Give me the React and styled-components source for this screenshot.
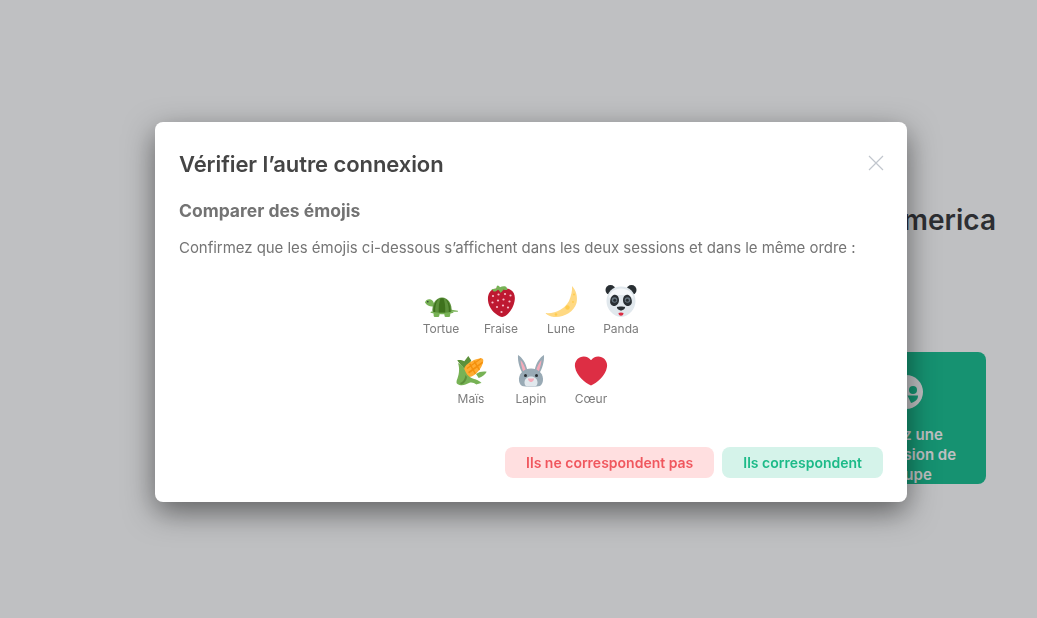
import React from "react";
import styled, { createGlobalStyle } from "styled-components";

const GlobalStyle = createGlobalStyle`
  html, body {
    margin: 0;
    padding: 0;
    height: 100%;
    background: #fff;
    font-family: Inter, "Noto Sans", sans-serif;
  }
`;

const Page = styled.div`
  width: 100%;
  height: 100vh;
  overflow: hidden;
  box-sizing: border-box;
  padding: 201px 41px 0 0;
  display: flex;
  flex-direction: column;
  align-items: flex-end;
`;

const Welcome = styled.h1`
  margin: 0;
  font-size: 28px;
  line-height: 38px;
  font-weight: 600;
  color: #2e2f32;
`;

const TileRow = styled.div`
  margin: 113px 10px 0 0;
  display: flex;
  gap: 20px;
`;

const Tile = styled.div`
  width: 160px;
  height: 132px;
  box-sizing: border-box;
  padding: 23px 20px 0;
  border-radius: 8px;
  background: #0dbd8b;
  color: #fff;
  font-size: 15px;
  font-weight: 600;
  line-height: 20px;
  text-align: center;
`;

const TileIcon = styled.svg`
  display: block;
  width: 34px;
  height: 34px;
  margin: 0 auto 16px;
`;

const Overlay = styled.div`
  position: fixed;
  inset: 0;
  box-sizing: border-box;
  padding: 6px 0 0 25px;
  display: flex;
  align-items: center;
  justify-content: center;
  background: rgba(44, 47, 52, 0.3);
`;

const Dialog = styled.div`
  width: 752px;
  height: 380px;
  box-sizing: border-box;
  padding: 24px;
  display: flex;
  flex-direction: column;
  border-radius: 8px;
  background: #fff;
  box-shadow: 0 10px 30px rgba(0, 0, 0, 0.5);
`;

const DialogHeader = styled.div`
  display: flex;
  align-items: center;
  justify-content: space-between;
  height: 36px;
`;

const Title = styled.h2`
  margin: 0;
  font-size: 22px;
  line-height: 36px;
  font-weight: 600;
  letter-spacing: -0.08px;
  color: #454545;
`;

const CloseButton = styled.svg`
  width: 16px;
  height: 16px;
  margin: -2px -1px 0 0;
`;

const Subtitle = styled.h3`
  margin: 18px 0 0;
  font-size: 17.5px;
  line-height: 22px;
  font-weight: 700;
  color: #737373;
`;

const Description = styled.p`
  margin: 16px 0 0;
  font-size: 15px;
  line-height: 20px;
  letter-spacing: -0.04px;
  color: #757575;
`;

const EmojiGrid = styled.div`
  width: 240px;
  margin: 25px auto 0;
  display: flex;
  flex-wrap: wrap;
  justify-content: center;
`;

const EmojiBlock = styled.div`
  width: 60px;
  height: 70px;
  display: flex;
  flex-direction: column;
  align-items: center;
`;

const EmojiArt = styled.svg`
  width: 36px;
  height: 36px;
  display: block;
`;

const EmojiLabel = styled.div`
  margin-top: 2px;
  font-size: 12px;
  line-height: 16px;
  color: #7c7c7c;
`;

const Actions = styled.div`
  margin-top: auto;
  display: flex;
  justify-content: flex-end;
  gap: 8px;
`;

const ActionButton = styled.button`
  height: 31px;
  padding: 0 21px;
  border: none;
  border-radius: 8px;
  font-family: inherit;
  font-size: 14px;
  font-weight: 600;
  background: ${(p) => (p.$danger ? "#ffdfe0" : "#d5f3ea")};
  color: ${(p) => (p.$danger ? "#f0575e" : "#1cba88")};
`;

const Turtle = () => (
  <EmojiArt viewBox="0 0 36 36">
    <path fill="#77B255" d="M2 19.500c.8-2.700 3.400-3.700 5.800-2.900 2 .7 3 2.500 3.200 4.400l-1 2.500c-3 .3-6.500-1-8-4z" />
    <path fill="#77B255" d="M10.500 29h6.500l-.8 4.200c-.1.500-.5.800-1 .8h-3.400c-.6 0-1-.4-1.100-1zM21 29h6.500l-.4 4c-.1.600-.5 1-1.100 1h-3.400c-.5 0-.9-.3-1-.8zM27 26.500l7.800 1.200c.4.500.1 1-.4 1L27 28.800z" />
    <path fill="#5C913B" d="M9.500 29.500C8.500 21 13 14.500 19 14.500S29.500 21 28.500 29.500c-6 1.400-13 1.400-19 0z" />
    <path fill="#3E721D" d="M15.500 16c-2.500 3-3.600 8-3.300 13.500l-1.700-.3c-.3-5.600 1.400-10.600 5-13.200zM17.500 15.200h3c1.500 4 2 9 1.700 14.600h-6.400c-.3-5.600.2-10.600 1.700-14.600zM22.500 16c3.600 2.600 5.300 7.600 5 13.200l-1.700.3c.3-5.500-.8-10.500-3.300-13.500z" />
    <path fill="#77B255" d="M8 28.500c7 1.800 15 1.800 22 0l.5 1.200c-7.500 2-15.500 2-23 0z" />
    <circle fill="#292F33" cx="4.800" cy="18.800" r=".8" />
  </EmojiArt>
);

const Strawberry = () => (
  <EmojiArt viewBox="0 0 36 36">
    <path fill="#BE1931" d="M11 6c5-1.500 12-1.500 16 .5 4.500 2.200 5.500 7 4.500 12-1 5.500-5 12.500-10.500 15-1.500.7-3 .5-4.500-.3C11 30.500 5.500 24.500 5 17.500 4.500 11.500 7 7.200 11 6z" />
    <path fill="#77B255" d="M8 6.500c1.500-.8 3.500-1 5-.8.500-1 .3-2.500 1.500-3.200 1.500.2 2 1.200 2.500 1.700 1.500-.7 4-1.200 6-.5 1 .5.500 1.500 1.500 3.300-1.500.3-3 0-4-.5-.8 1.500-2 3-3.200 3.300-.6-1.500-1-2.300-2.300-3.100-1.500 1.400-3.500 2.200-4.500 1.800-.5-1-.8-1.400-2-2z" />
    <g fill="#F7BFCB">
      <circle cx="10" cy="13" r="1.100" /><circle cx="15.500" cy="11.500" r="1.100" /><circle cx="22" cy="11" r="1.100" /><circle cx="27.500" cy="12.500" r="1.100" />
      <circle cx="9.500" cy="19.500" r="1.100" /><circle cx="15" cy="17.500" r="1.100" /><circle cx="20.500" cy="16.500" r="1.100" /><circle cx="26.500" cy="18.500" r="1.100" />
      <circle cx="14" cy="24" r="1.100" /><circle cx="20" cy="22.500" r="1.100" /><circle cx="25" cy="24.500" r="1.100" /><circle cx="18.500" cy="29" r="1.100" />
    </g>
  </EmojiArt>
);

const Moon = () => (
  <EmojiArt viewBox="0 0 36 36">
    <path fill="#FFD983" d="M29 3c4 4 6 11 4.500 17C31 29 20 35 11 34c-4-.500-7-2-8.500-4 9.500 1 19.500-4 23.500-12 2-5 3.500-10 3-15z" />
    <g fill="#FFCC4D">
      <circle cx="24.500" cy="24.500" r="2.200" /><circle cx="13" cy="31.500" r="1.300" /><circle cx="31" cy="11.500" r="1" /><circle cx="30" cy="19" r=".9" />
    </g>
  </EmojiArt>
);

const Panda = () => (
  <EmojiArt viewBox="0 0 36 36">
    <circle fill="#292F33" cx="7.500" cy="7" r="5" />
    <circle fill="#292F33" cx="28.500" cy="7" r="5" />
    <path fill="#E1E8ED" d="M18 3.500c8.500 0 14.500 6 14.500 14.500 0 4-1.500 8-4 10.500-3 3-6.500 5.500-10.500 5.500s-7.500-2.500-10.500-5.500c-2.500-2.500-4-6.500-4-10.500C3.500 9.500 9.500 3.500 18 3.500z" />
    <path fill="#F5F8FA" d="M18 5.500c6 0 11.500 3.500 12.500 10-3.500-3.500-7-3.500-12.500-3.500s-9 0-12.500 3.500C6.500 9 12 5.500 18 5.500z" />
    <path fill="#292F33" d="M10.500 12c3-1.300 5.500 1 5.500 5 0 3.800-2.800 6.500-5.500 6-2.700-.5-3.800-2.800-3.300-5.500.4-2.400 1.300-4.500 3.300-5.500zM25.500 12c-3-1.300-5.500 1-5.500 5 0 3.800 2.800 6.500 5.500 6 2.700-.5 3.800-2.800 3.300-5.500-.4-2.400-1.300-4.500-3.300-5.500z" />
    <circle fill="#66757F" cx="11.500" cy="17" r="2.800" />
    <circle fill="#66757F" cx="24.500" cy="17" r="2.800" />
    <circle fill="#292F33" cx="11.700" cy="17.300" r="1.500" />
    <circle fill="#292F33" cx="24.300" cy="17.300" r="1.500" />
    <path fill="#292F33" d="M14 24c1.700-.8 6.300-.8 8 0 .6 1.200-2 3.500-4 3.500s-4.600-2.300-4-3.500z" />
    <path fill="#DD2E44" d="M15.500 30c1.500-.7 3.500-.7 5 0 .1 1.500-1 2.700-2.500 2.700s-2.600-1.200-2.500-2.700z" />
  </EmojiArt>
);

const Corn = () => (
  <EmojiArt viewBox="0 0 36 36">
    <path fill="#5C913B" d="M9 13C7 11 5 9 4.300 7c3-.3 5 0 7 1.300L15.300 3l3 4.500-6 10z" />
    <path fill="#FFAC33" d="M12 13.700C15 9.500 22 6 27.500 5.300c2-.2 3 .8 2.800 2.700-.8 5.500-4.500 10.700-9 14-2.500 1.800-5 2.500-7 1.500C11 22 9.800 17 12 13.700z" />
    <path fill="#F4900C" d="M13.500 15l14-9.700 1 .5-14 10.200zM15 19l14.500-10.500.5 1.500L16.200 20.500zM17.500 10.500l5.500 10-1 .8-6-10zM22 8l5 8.500-1 1-5.500-8.800z" />
    <path fill="#77B255" d="M5 10c3.500 1.500 5.500 3.500 6.500 6.500 1.500 4 3.500 7 7 8.500 3.500 1.500 6.500 1.500 10 5-2 .3-3.500 1-5 1.500-2.500-1.800-5-2.500-7.500-1.500-3 1.500-6 3-9.500 2-2.700-.7-3.500-2-2.800-4.500C6 22 7 16 5 10z" />
    <path fill="#77B255" d="M23 21c3-2 6-2.800 10.700-2.300-1.500 2.800-4.500 5.300-8 6.300z" />
    <path fill="#5C913B" d="M7 30c3-1 5-4 5.500-8l1.500 2c-.5 3.500-2.500 6.500-6 7.500z" />
  </EmojiArt>
);

const Rabbit = () => (
  <EmojiArt viewBox="0 0 36 36">
    <path fill="#99AAB5" d="M5 2c4 2.500 8 7.500 9.500 16l-4.500 3C7 16 4.500 9 5 2zM31 2c-4 2.500-8 7.500-9.500 16l4.500 3c3-5 5.500-12 5-19z" />
    <path fill="#F4ABBA" d="M7.500 7c2.500 3 4.500 6.500 5.500 11l-2.500 1.500C9 15 7.800 11 7.500 7zM28.500 7c-2.500 3-4.500 6.500-5.500 11l2.500 1.500C27 15 28.200 11 28.500 7z" />
    <path fill="#99AAB5" d="M18 15.500c7 0 11.500 4.500 12 10 .3 3.500-1 6-3 7.500-2.500 1-15.500 1-18 0-2-1.500-3.300-4-3-7.500.5-5.500 5-10 12-10z" />
    <path fill="#E1E8ED" d="M18 23.500c3.500 0 6.500 2.500 6.500 6 0 2-1 3.700-2.500 4h-8c-1.500-.3-2.500-2-2.500-4 0-3.500 3-6 6.500-6z" />
    <circle fill="#292F33" cx="12.500" cy="22.500" r="1.500" />
    <circle fill="#292F33" cx="23.500" cy="22.500" r="1.500" />
    <path fill="#F4ABBA" d="M15 25.500h6c.4 1.300-1.600 3.500-3 3.500s-3.400-2.200-3-3.500z" />
  </EmojiArt>
);

const Heart = () => (
  <EmojiArt viewBox="-2 -2 40 40">
    <path fill="#DD2E44" d="M35.885 11.833c0-5.45-4.418-9.868-9.867-9.868-3.308 0-6.227 1.633-8.018 4.129-1.791-2.496-4.71-4.129-8.017-4.129-5.45 0-9.868 4.417-9.868 9.868 0 .772.098 1.52.266 2.241C1.751 22.587 11.216 31.568 18 34.034c6.783-2.466 16.249-11.447 17.617-19.959.17-.721.268-1.469.268-2.242z" />
  </EmojiArt>
);

const EMOJIS = [
  { label: "Tortue", Art: Turtle },
  { label: "Fraise", Art: Strawberry },
  { label: "Lune", Art: Moon },
  { label: "Panda", Art: Panda },
  { label: "Maïs", Art: Corn },
  { label: "Lapin", Art: Rabbit },
  { label: "Cœur", Art: Heart },
];

export default function App() {
  return (
    <>
      <GlobalStyle />
      <Page>
        <Welcome>Bienvenue sur Element America</Welcome>
        <TileRow>
          <Tile>
            <TileIcon viewBox="0 0 34 34">
              <circle cx="17" cy="17" r="17" fill="#fff" />
              <circle cx="24" cy="15" r="4" fill="#0dbd8b" />
              <path d="M18.500 20.500h10.500c0 4-2.500 6-7 7.500z" fill="#0dbd8b" />
              <circle cx="10" cy="15" r="4" fill="#0dbd8b" />
              <path d="M5 20.500h10.500l-3.500 7.500c-4.500-1.500-7-3.500-7-7.500z" fill="#0dbd8b" />
            </TileIcon>
            Créez une discussion de groupe
          </Tile>
        </TileRow>
      </Page>
      <Overlay>
        <Dialog>
          <DialogHeader>
            <Title>Vérifier l’autre connexion</Title>
            <CloseButton viewBox="0 0 16 16">
              <path d="M1 1l14 14M15 1L1 15" stroke="#c1c6cd" strokeWidth="1.200" fill="none" />
            </CloseButton>
          </DialogHeader>
          <Subtitle>Comparer des émojis</Subtitle>
          <Description>
            Confirmez que les émojis ci-dessous s’affichent dans les deux sessions et dans le même ordre :
          </Description>
          <EmojiGrid>
            {EMOJIS.map(({ label, Art }) => (
              <EmojiBlock key={label}>
                <Art />
                <EmojiLabel>{label}</EmojiLabel>
              </EmojiBlock>
            ))}
          </EmojiGrid>
          <Actions>
            <ActionButton $danger>Ils ne correspondent pas</ActionButton>
            <ActionButton>Ils correspondent</ActionButton>
          </Actions>
        </Dialog>
      </Overlay>
    </>
  );
}
